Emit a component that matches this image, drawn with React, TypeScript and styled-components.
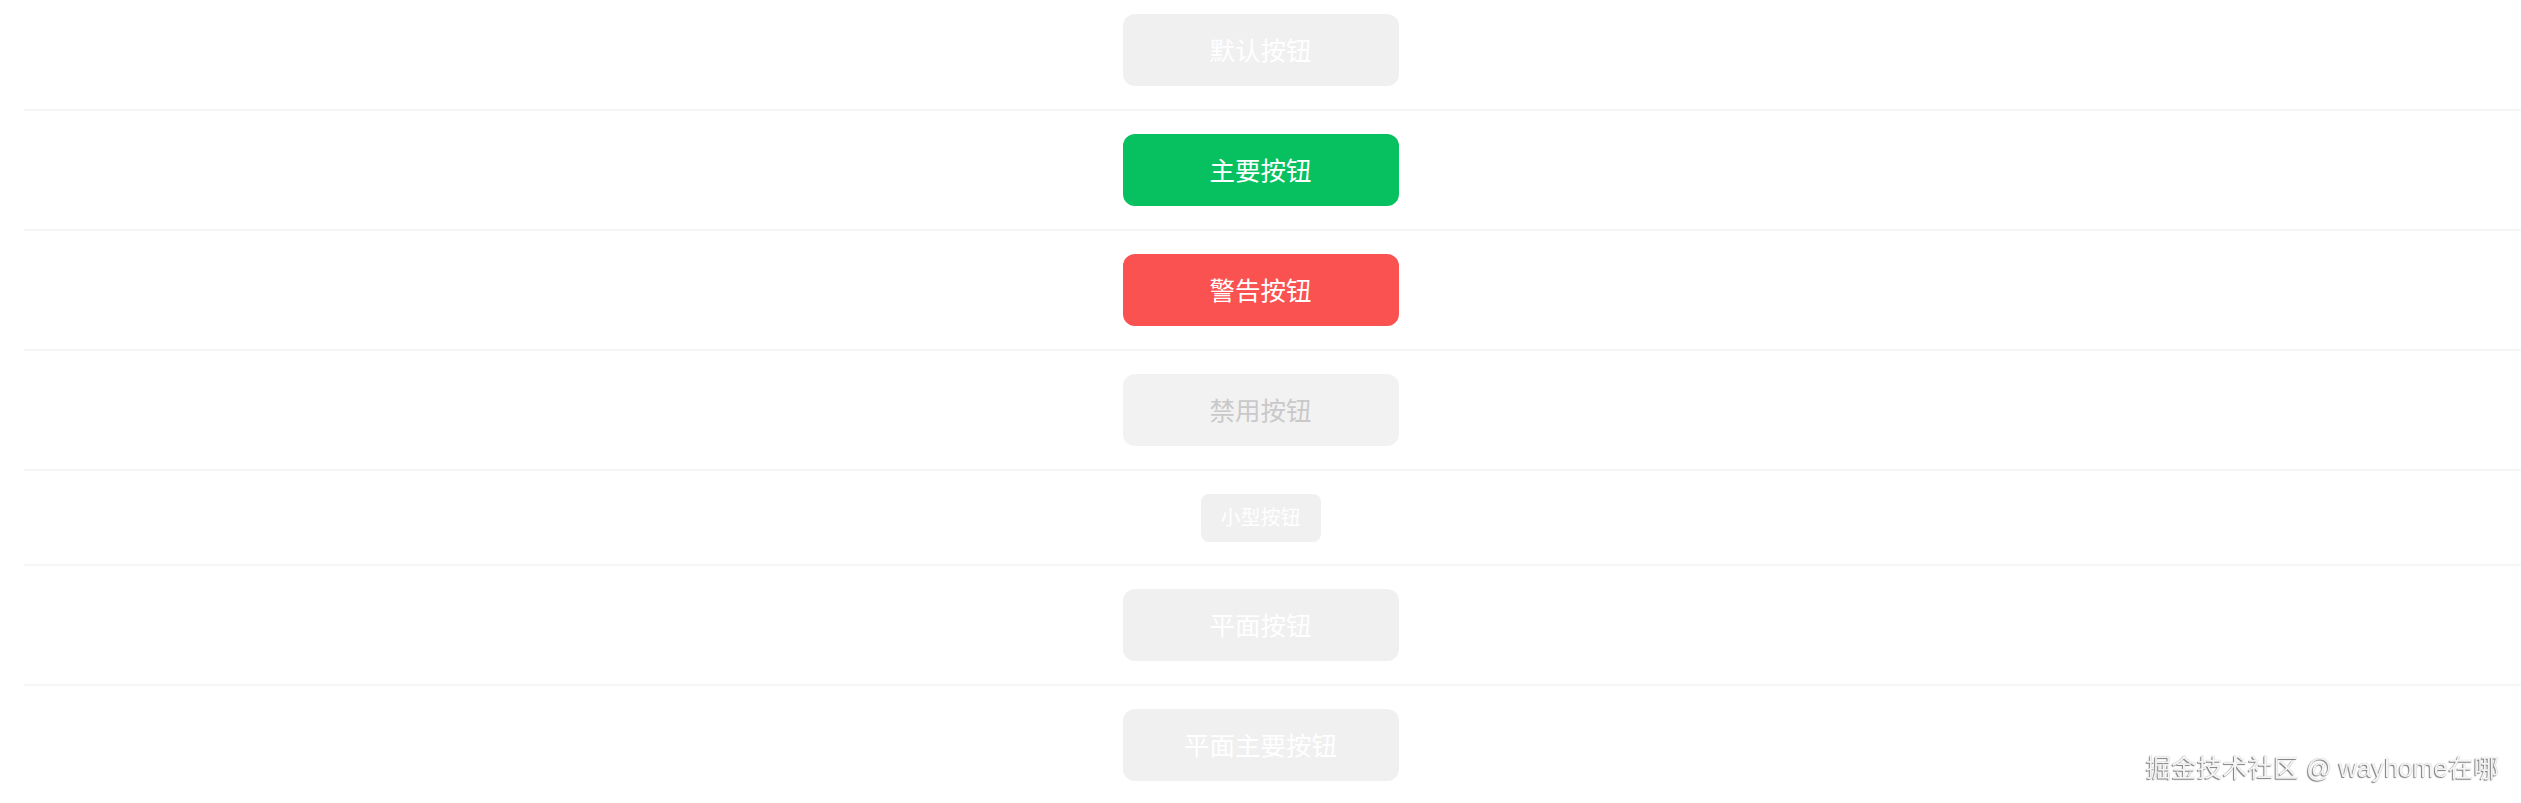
import React from "react";
import styled, { createGlobalStyle, css } from "styled-components";

const Global = createGlobalStyle`
  html, body {
    margin: 0;
    padding: 0;
    background: #ffffff;
    font-family: "Liberation Sans", "Noto Sans CJK SC", sans-serif;
    overflow: hidden;
  }
`;

const Page = styled.div`
  display: flex;
  flex-direction: column;
  margin-top: -9px;
`;

const Row = styled.div`
  display: flex;
  flex-direction: column;
`;

const ButtonArea = styled.div<{ $small?: boolean }>`
  display: flex;
  justify-content: center;
  padding: 23px 0 ${(p) => (p.$small ? "22px" : "23px")};
`;

const Divider = styled.div`
  margin-left: 24px;
  height: 2px;
  background: #f6f6f6;
`;

type Variant = "default" | "primary" | "warn" | "disabled" | "plain";

const variants: Record<Variant, ReturnType<typeof css>> = {
  default: css`
    background: #f0f0f0;
    color: #ffffff;
  `,
  plain: css`
    background: #f0f0f0;
    color: #ffffff;
  `,
  primary: css`
    background: #07c160;
    color: #ffffff;
  `,
  warn: css`
    background: #fa5151;
    color: #ffffff;
  `,
  disabled: css`
    background: #f2f2f2;
    color: #c9c9c9;
  `,
};

const Button = styled.button<{ $variant: Variant; $small?: boolean }>`
  border: none;
  outline: none;
  display: flex;
  align-items: center;
  justify-content: center;
  width: ${(p) => (p.$small ? "120px" : "276px")};
  height: ${(p) => (p.$small ? "48px" : "72px")};
  border-radius: ${(p) => (p.$small ? "8px" : "12px")};
  font-family: "Noto Sans CJK SC", "Liberation Sans", sans-serif;
  font-size: ${(p) => (p.$small ? "20px" : "25.5px")};
  font-weight: 400;
  line-height: 1;
  padding: 0 0 ${(p) => (p.$small ? "2px" : "3px")};
  cursor: pointer;
  ${(p) => variants[p.$variant]}
`;

const Watermark = styled.div`
  position: fixed;
  right: 22px;
  bottom: 20px;
  font-family: "Liberation Sans", "Noto Sans CJK SC", sans-serif;
  font-size: 25.5px;
  line-height: 30px;
  color: #f4f4f4;
  text-shadow: -1px 1px 1px rgba(0, 0, 0, 0.5), 0 0 1px rgba(0, 0, 0, 0.3);
  white-space: nowrap;
`;

const buttons: { label: string; variant: Variant; small?: boolean }[] = [
  { label: "默认按钮", variant: "default" },
  { label: "主要按钮", variant: "primary" },
  { label: "警告按钮", variant: "warn" },
  { label: "禁用按钮", variant: "disabled" },
  { label: "小型按钮", variant: "default", small: true },
  { label: "平面按钮", variant: "plain" },
  { label: "平面主要按钮", variant: "plain" },
];

export default function App() {
  return (
    <>
      <Global />
      <Page>
        {buttons.map((b, i) => (
          <Row key={b.label}>
            <ButtonArea $small={b.small}>
              <Button $variant={b.variant} $small={b.small}>
                {b.label}
              </Button>
            </ButtonArea>
            {i < buttons.length - 1 && <Divider />}
          </Row>
        ))}
      </Page>
      <Watermark>掘金技术社区 @ wayhome在哪</Watermark>
    </>
  );
}
